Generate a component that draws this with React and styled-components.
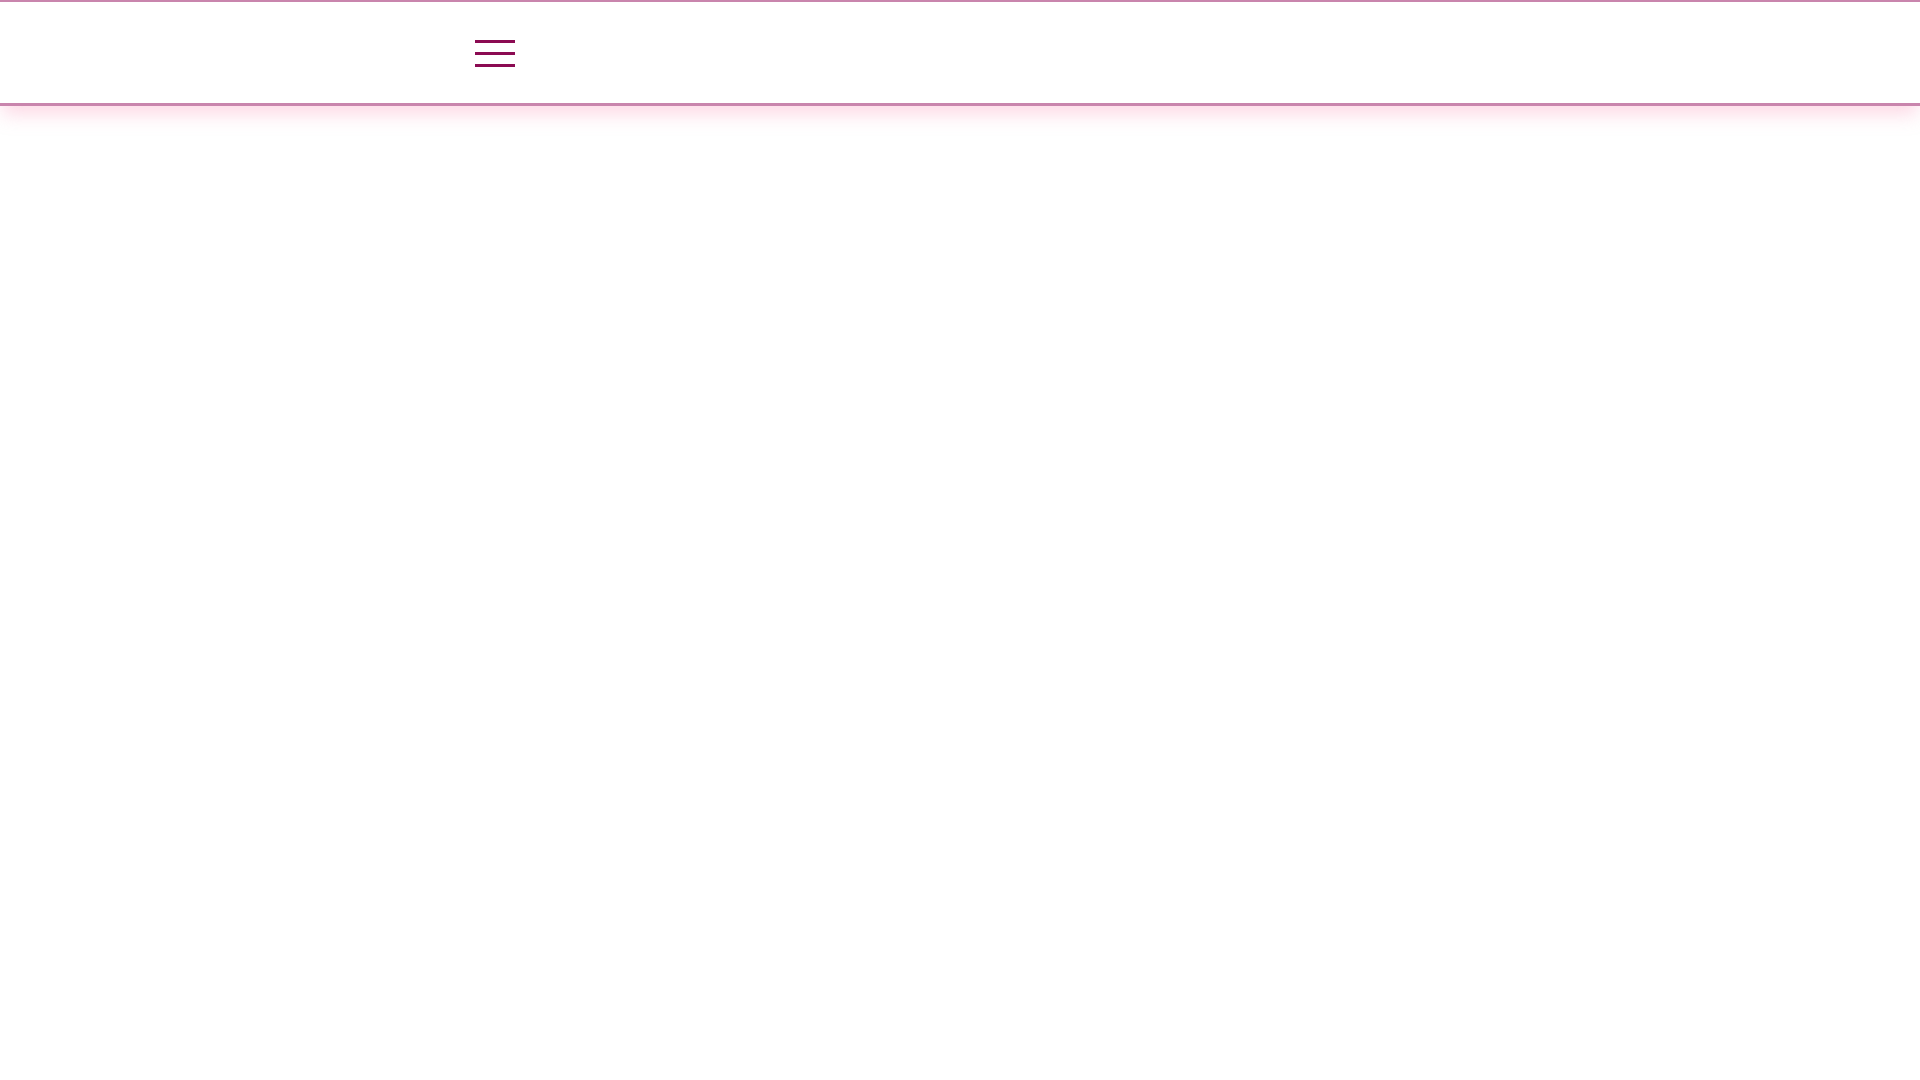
import React from 'react';
import styled, { createGlobalStyle } from 'styled-components';

const Global = createGlobalStyle`
    html, body {
        margin:0;
        padding:0;
        background:#fff;
        font-family:"Open Sans", "Liberation Sans", sans-serif;
    }
    html::-webkit-scrollbar {
        width:15px;
        background:#f1f1f1;
    }
    html::-webkit-scrollbar-track {
        background:#f1f1f1;
    }
    html::-webkit-scrollbar-thumb {
        background:#c1c1c1;
        border:2px solid #f1f1f1;
        border-top:0;
        border-bottom:0;
    }
    html::-webkit-scrollbar-button:single-button {
        display:block;
        height:15px;
        background-color:#f1f1f1;
        background-repeat:no-repeat;
        background-position:center;
        background-size:8px 4px;
    }
    html::-webkit-scrollbar-button:single-button:vertical:decrement {
        background-image:conic-gradient(from 135deg at 50% 0, #a3a3a3 0 90deg, transparent 0);
    }
    html::-webkit-scrollbar-button:single-button:vertical:increment {
        background-image:conic-gradient(from -45deg at 50% 100%, #505050 0 90deg, transparent 0);
    }
`
const Header = styled.header`
    position:relative;
    z-index:2;
    display:flex;
    align-items:center;
    height:101px;
    border-top:2px solid #c985ad;
    border-bottom:3px solid #c985ad;
    background:#fff;
    box-shadow:0 10px 18px -2px rgba(250, 140, 180, 0.34);
`
const Brand = styled.div`
    width:475px;
    height:100%;
`
const Toggle = styled.button`
    display:flex;
    flex-direction:column;
    justify-content:space-between;
    width:40px;
    height:27px;
    padding:0;
    margin-top:1px;
    border:none;
    background:transparent;
    cursor:pointer;
`
const Bar = styled.span`
    display:block;
    height:3px;
    width:100%;
    background:#8b0b52;
`
const Main = styled.main`
    height:9500px;
`

const App = () => {
    return (
        <>
            <Global />
            <Header>
                <Brand />
                <Toggle aria-label="Menu">
                    <Bar />
                    <Bar />
                    <Bar />
                </Toggle>
            </Header>
            <Main />
        </>
    )
}

export default App
